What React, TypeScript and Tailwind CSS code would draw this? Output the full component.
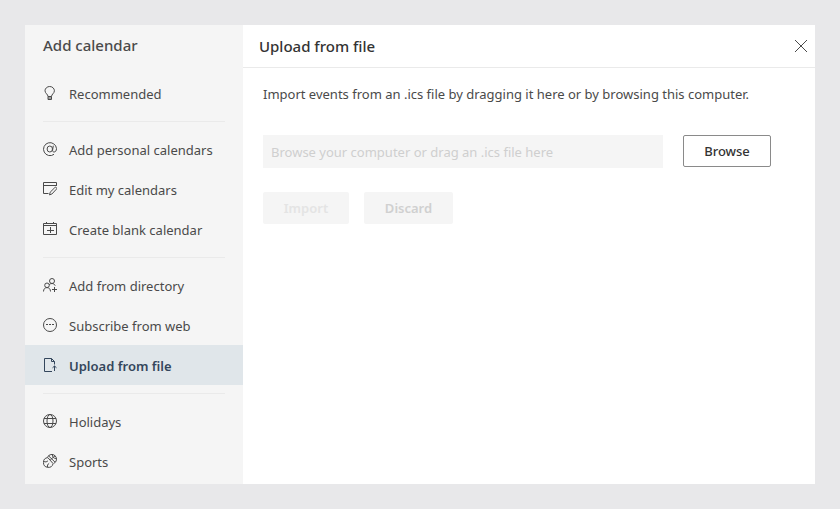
import { useRef, useState } from "react";
import type { ReactNode } from "react";

const Icon = ({ children }: { children: ReactNode }) => (
  <svg
    xmlns="http://www.w3.org/2000/svg"
    fill="none"
    viewBox="0 0 14 14"
    stroke="currentColor"
    aria-hidden="true"
    className="w-3.5 h-3.5 shrink-0"
  >
    {children}
  </svg>
);

const icons = {
  bulb: (
    <Icon>
      <path d="M5 10.500c0-2.200-3-3.200-3-5.700a4.700 4.300 0 0 1 9.400 0c0 2.500-2.900 3.500-2.900 5.700zM5 10.500v3h3.500v-3M5 12h3.500" />
    </Icon>
  ),
  at: (
    <Icon>
      <path d="M11 12.300A6.500 6.500 0 1 1 13.500 6.600C13.500 8.800 12.400 10 11.100 10 9.900 10 9.400 9.200 9.600 8l.7-4.300" />
      <ellipse cx="6.800" cy="7" rx="2.700" ry="3" />
    </Icon>
  ),
  edit: (
    <Icon>
      <path d="M5.500 11.500h-5v-11h13V4M.5 3.500h13" />
      <path d="M6.500 12.900l.7-2.700 4.600-4.600a1.100 1.100 0 0 1 1.600 1.600L8.900 12z" />
    </Icon>
  ),
  create: (
    <Icon>
      <path d="M.5 1.500h13v11H.5zM.5 3.500h13M3.500 0v2M10.500 0v2M7.500 5v6M4 8.500h7" />
    </Icon>
  ),
  directory: (
    <Icon>
      <circle cx="9" cy="3" r="2.500" />
      <circle cx="4" cy="7.300" r="2.300" />
      <path d="M.5 13.500c0-2.500 1.500-3.900 3.500-3.900s3.500 1.400 3.500 3.900M6.200 6.700c.7-.8 1.600-1.200 2.800-1.200 1.600 0 2.600.8 3.200 2.200M11.500 9v5M9 11.500h5" />
    </Icon>
  ),
  web: (
    <Icon>
      <circle cx="7" cy="7" r="6.500" />
      <path d="M3 6.500h2M6 6.500h2M9 6.500h2" />
    </Icon>
  ),
  upload: (
    <Icon>
      <path d="M9 13.500H1.500V.5h7l3 3v3M8.500 .5v3h3M11.500 13V8M9.500 9.800l2-1.800 2 1.800" />
    </Icon>
  ),
  globe: (
    <Icon>
      <circle cx="7" cy="7" r="6.500" />
      <ellipse cx="7" cy="7" rx="3" ry="6.500" />
      <path d="M1 4.500h12M1 9.500h12" />
    </Icon>
  ),
  sports: (
    <Icon>
      <path d="M4.500 3.300A4.700 4.700 0 1 1 10.800 9.400M5.500 1.800l6.700 6.500M7.300 5.800l4.800-4M9.500 .5c-.3 2.500 1 4 3.800 4" />
      <path d="M4.800 3.600a4.900 4.900 0 1 0 5.300 6zM.8 7.500c1.700.7 3 .5 4.200-.8M4.500 13.200c-.3-1.700.2-3 1.700-4" />
    </Icon>
  ),
};

const groups = [
  [{ label: "Recommended", icon: icons.bulb }],
  [
    { label: "Add personal calendars", icon: icons.at },
    { label: "Edit my calendars", icon: icons.edit },
    { label: "Create blank calendar", icon: icons.create },
  ],
  [
    { label: "Add from directory", icon: icons.directory },
    { label: "Subscribe from web", icon: icons.web },
    { label: "Upload from file", icon: icons.upload },
  ],
  [
    { label: "Holidays", icon: icons.globe },
    { label: "Sports", icon: icons.sports },
  ],
];

const App = () => {
  const [active, setActive] = useState("Upload from file");
  const [fileName, setFileName] = useState("");
  const fileRef = useRef<HTMLInputElement | null>(null);

  return (
    <div className="min-h-screen bg-[#e8e8ea] p-[25px] font-['Noto_Sans','Open_Sans',sans-serif] text-[13px] text-[#4a4a4a]">
      <div className="flex bg-white">
        <nav aria-label="Add calendar" className="w-[218px] shrink-0 bg-[#f5f5f5] pb-[3px]">
          <h1 className="h-12 px-[18px] pt-2 text-[15px] leading-6 font-medium">Add calendar</h1>
          {groups.map((group, index) => (
            <div key={index}>
              {index > 0 && <hr className="mx-[18px] mt-2 mb-[7px] border-[#eaeaea]" />}
              {group.map((item) => (
                <button
                  key={item.label}
                  type="button"
                  onClick={() => setActive(item.label)}
                  className={`flex h-10 w-full items-center gap-3 px-[18px] text-left whitespace-nowrap ${
                    active === item.label ? "bg-[#e0e6ea] font-semibold text-[#34465c]" : ""
                  }`}
                >
                  {item.icon}
                  <span className="pt-1">{item.label}</span>
                </button>
              ))}
            </div>
          ))}
        </nav>

        <main className="min-w-0 flex-1">
          <header className="flex h-[43px] items-center justify-between border-b border-[#eaeaea] pr-2 pl-4">
            <h2 className="text-[15px] leading-6 font-medium text-[#333333]">Upload from file</h2>
            <button type="button" aria-label="Close">
              <svg viewBox="0 0 12 12" fill="none" stroke="currentColor" className="h-3 w-3">
                <path d="M0 0l12 12M12 0L0 12" />
              </svg>
            </button>
          </header>

          <div className="px-5 pt-4">
            <p className="leading-5">
              Import events from an .ics file by dragging it here or by browsing this computer.
            </p>

            <div className="mt-[31px] flex items-start gap-5">
              <input
                type="text"
                readOnly
                value={fileName}
                aria-label="Calendar file"
                placeholder="Browse your computer or drag an .ics file here"
                className="h-[33px] max-w-[400px] min-w-0 flex-1 bg-[#f5f5f5] px-2 placeholder:text-[#cfcfcf] focus:outline-none"
              />
              <input
                ref={fileRef}
                type="file"
                accept=".ics"
                aria-label="Choose file"
                className="hidden"
                onChange={(e) => setFileName(e.target.files?.[0]?.name ?? "")}
              />
              <button
                type="button"
                onClick={() => fileRef.current?.click()}
                className="h-8 w-[88px] rounded-xs border border-[#8a8a8a] pt-0.5 font-medium text-[#333333]"
              >
                Browse
              </button>
            </div>

            <div className="mt-6 flex gap-[15px]">
              <button
                type="button"
                disabled={!fileName}
                className="h-8 w-[86px] rounded-xs bg-[#f5f5f5] pt-0.5 font-semibold text-[#333333] disabled:text-[#e4e4e4]"
              >
                Import
              </button>
              <button
                type="button"
                disabled={!fileName}
                onClick={() => setFileName("")}
                className="h-8 w-[89px] rounded-xs bg-[#f5f5f5] pt-0.5 font-semibold text-[#333333] disabled:text-[#d0d0d0]"
              >
                Discard
              </button>
            </div>
          </div>
        </main>
      </div>
    </div>
  );
};

export default App;
